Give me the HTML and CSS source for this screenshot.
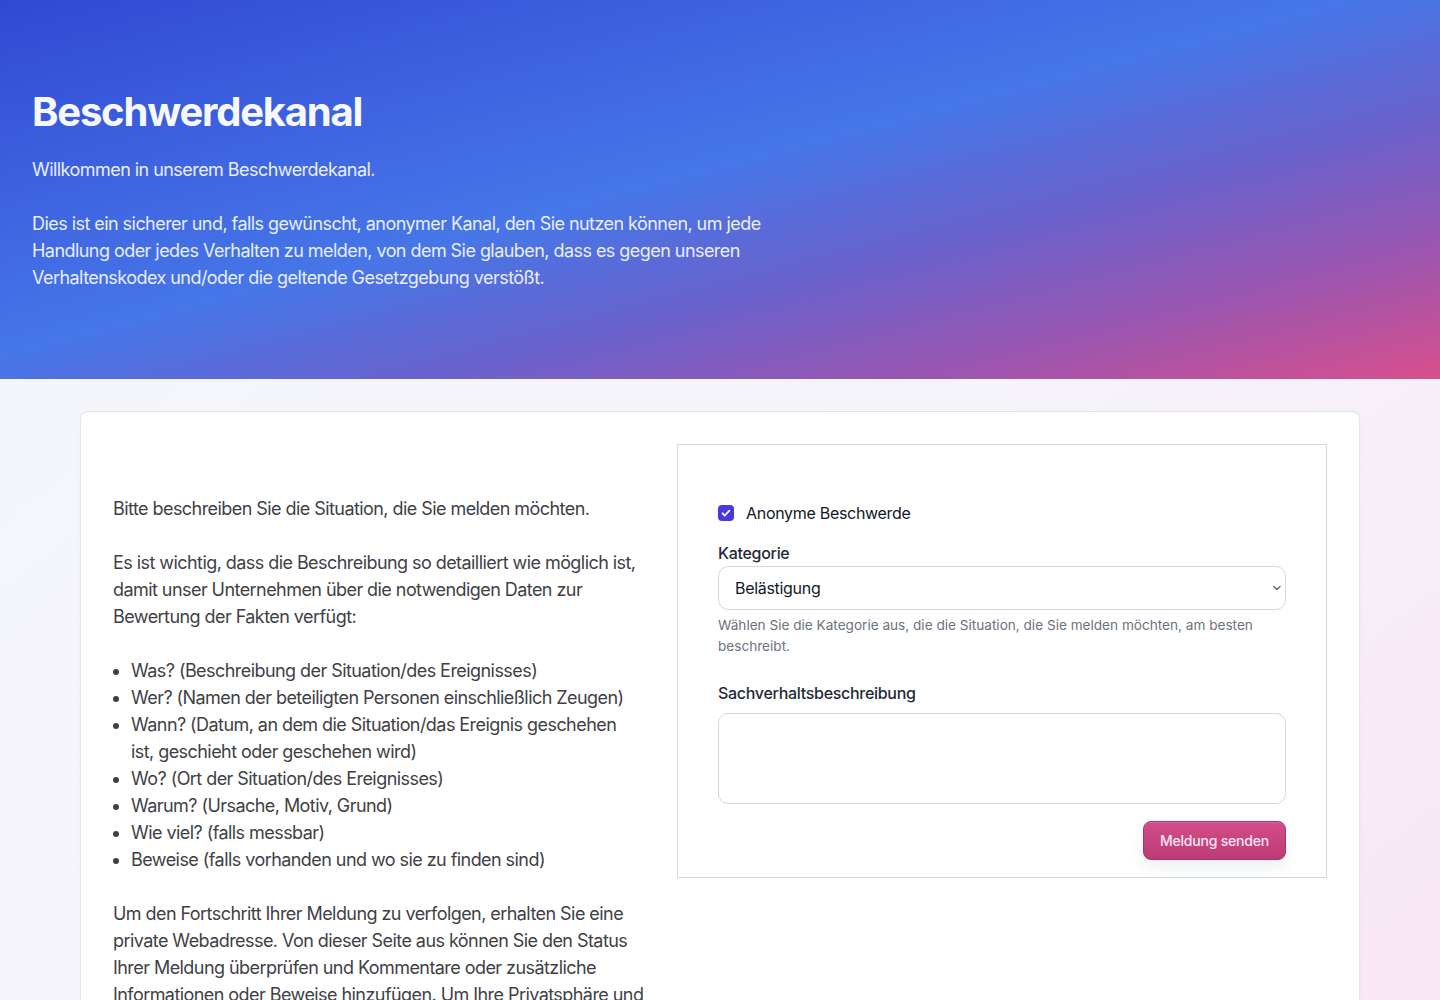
FILE: index.html
```html
<!DOCTYPE html>
<html lang="de">
<head>
<meta charset="utf-8">
<title>Beschwerdekanal</title>
<link rel="stylesheet" href="styles.css">
</head>
<body>
<header class="hero">
  <h1 class="hero-title">Beschwerdekanal</h1>
  <div class="hero-text">
    <p>Willkommen in unserem Beschwerdekanal.</p>
    <p>Dies ist ein sicherer und, falls gewünscht, anonymer Kanal, den Sie nutzen können, um jede Handlung oder jedes Verhalten zu melden, von dem Sie glauben, dass es gegen unseren Verhaltenskodex und/oder die geltende Gesetzgebung verstößt.</p>
  </div>
</header>
<main class="main">
  <section class="card">
    <div class="intro">
      <p>Bitte beschreiben Sie die Situation, die Sie melden möchten.</p>
      <p>Es ist wichtig, dass die Beschreibung so detailliert wie möglich ist, damit unser Unternehmen über die notwendigen Daten zur Bewertung der Fakten verfügt:</p>
      <ul class="intro-list">
        <li>Was? (Beschreibung der Situation/des Ereignisses)</li>
        <li>Wer? (Namen der beteiligten Personen einschließlich Zeugen)</li>
        <li>Wann? (Datum, an dem die Situation/das Ereignis geschehen ist, geschieht oder geschehen wird)</li>
        <li>Wo? (Ort der Situation/des Ereignisses)</li>
        <li>Warum? (Ursache, Motiv, Grund)</li>
        <li>Wie viel? (falls messbar)</li>
        <li>Beweise (falls vorhanden und wo sie zu finden sind)</li>
      </ul>
      <p>Um den Fortschritt Ihrer Meldung zu verfolgen, erhalten Sie eine private Webadresse. Von dieser Seite aus können Sie den Status Ihrer Meldung überprüfen und Kommentare oder zusätzliche Informationen oder Beweise hinzufügen. Um Ihre Privatsphäre und Anonymität zu schützen, bewahren Sie diese Adresse bitte sicher auf.</p>
    </div>
    <form class="form-box">
      <label class="check-row">
        <span class="check-box">
          <svg viewBox="0 0 16 16" width="16" height="16"><path d="M4.6 8.3l2.2 2.2 4.6-4.9" fill="none" stroke="#fff" stroke-width="1.8" stroke-linecap="round" stroke-linejoin="round"/></svg>
        </span>
        <span class="check-label">Anonyme Beschwerde</span>
      </label>
      <div class="field">
        <label class="field-label field-label-tight" for="kategorie">Kategorie</label>
        <div class="select-wrap">
          <select id="kategorie" class="select">
            <option>Belästigung</option>
          </select>
          <svg class="chevron" viewBox="0 0 10 6" width="10" height="6"><path d="M1.8 1.3L5 4.5l3.2-3.2" fill="none" stroke="#4b5563" stroke-width="1.2" stroke-linecap="round" stroke-linejoin="round"/></svg>
        </div>
        <p class="help">Wählen Sie die Kategorie aus, die die Situation, die Sie melden möchten, am besten beschreibt.</p>
      </div>
      <div class="field field-spaced">
        <label class="field-label" for="beschreibung">Sachverhaltsbeschreibung</label>
        <textarea id="beschreibung" class="textarea"></textarea>
      </div>
      <div class="actions">
        <button type="button" class="btn">Meldung senden</button>
      </div>
    </form>
  </section>
</main>
</body>
</html>
```
FILE: styles.css
```css
* { box-sizing: border-box; }

html, body { margin: 0; padding: 0; }

body {
  font-family: "Inter", "Noto Sans", sans-serif;
  color: #3f3f46;
  min-height: 1000px;
  background:
    radial-gradient(ellipse 800px 460px at 100% 0%, rgba(228, 232, 248, 0.95), rgba(228, 232, 248, 0) 75%),
    linear-gradient(to bottom right, #f4f6fd 0%, #f6f4fb 50%, #f8e6f2 100%);
}

.hero {
  padding: 88px 32px 88px;
  background: linear-gradient(to bottom right, #3049d4 0%, #3f66e2 30%, #4676e8 47%, #6a62cc 65%, #9a56b0 82%, #d84f8c 100%);
  color: #fff;
}

.hero-title {
  margin: 0;
  font-size: 40px;
  line-height: 48px;
  font-weight: 700;
  letter-spacing: -1.2px;
  color: #f8f9ff;
}

.hero-text {
  margin-top: 20px;
  max-width: 768px;
  font-size: 18px;
  line-height: 27px;
  letter-spacing: -0.55px;
  color: #e9eefc;
}

.hero-text p { margin: 0 0 27px; }
.hero-text p:last-child { margin-bottom: 0; }

.main {
  padding: 32px 80px 0;
}

.card {
  background: #fff;
  border: 1px solid #dfe4ec;
  border-radius: 8px;
  padding: 32px;
  display: grid;
  grid-template-columns: 532px 1fr;
  column-gap: 32px;
  align-items: start;
  min-height: 700px;
  box-shadow: 0 1px 3px rgba(30, 41, 80, 0.04);
}

.intro {
  padding-top: 51px;
  font-size: 18px;
  line-height: 27px;
  letter-spacing: -0.56px;
  color: #3f3f46;
}

.intro p { margin: 0 0 27px; }

.intro-list {
  margin: 0 0 27px;
  padding: 0 6px 0 18px;
}

.form-box {
  border: 1px solid #cfdae6;
  padding: 56px 40px 17px;
  background: #fff;
}

.check-row {
  display: flex;
  align-items: center;
  gap: 12px;
  height: 24px;
  cursor: pointer;
}

.check-box {
  width: 16px;
  height: 16px;
  border-radius: 4px;
  background: #4739dc;
  display: flex;
}

.check-label {
  font-size: 16px;
  line-height: 24px;
  letter-spacing: -0.3px;
  color: #111827;
}

.field { margin-top: 16px; }
.field-spaced { margin-top: 24px; }

.field-label {
  display: block;
  font-size: 16px;
  line-height: 24px;
  font-weight: 500;
  letter-spacing: -0.3px;
  color: #1f2937;
  margin-bottom: 8px;
}

.field-label-tight { margin-bottom: 1px; }

.select-wrap { position: relative; }

.select {
  appearance: none;
  -webkit-appearance: none;
  width: 100%;
  height: 44px;
  padding: 0 16px;
  border: 1px solid #d4d8de;
  border-radius: 10px;
  background: #fff;
  font-family: inherit;
  font-size: 16px;
  letter-spacing: -0.3px;
  color: #111827;
}

.chevron {
  position: absolute;
  right: 4px;
  top: 19px;
  pointer-events: none;
}

.help {
  margin: 5px 0 0;
  font-size: 13.6px;
  line-height: 21px;
  color: #6b7280;
}

.textarea {
  display: block;
  width: 100%;
  height: 91px;
  border: 1px solid #d4d8de;
  border-radius: 10px;
  resize: none;
  font-family: inherit;
  font-size: 16px;
  padding: 10px 16px;
}

.actions {
  margin-top: 17px;
  display: flex;
  justify-content: flex-end;
}

.btn {
  height: 39px;
  padding: 0 16px;
  border: 1px solid #a9336a;
  border-radius: 8px;
  background: linear-gradient(to bottom, #d44d89, #bd3b75);
  color: #fde6f1;
  font-family: inherit;
  font-size: 14px;
  font-weight: 500;
  letter-spacing: -0.2px;
  box-shadow: 0 8px 14px rgba(40, 60, 80, 0.08), inset 0 1px 0 rgba(255, 255, 255, 0.15);
  cursor: pointer;
}
```
